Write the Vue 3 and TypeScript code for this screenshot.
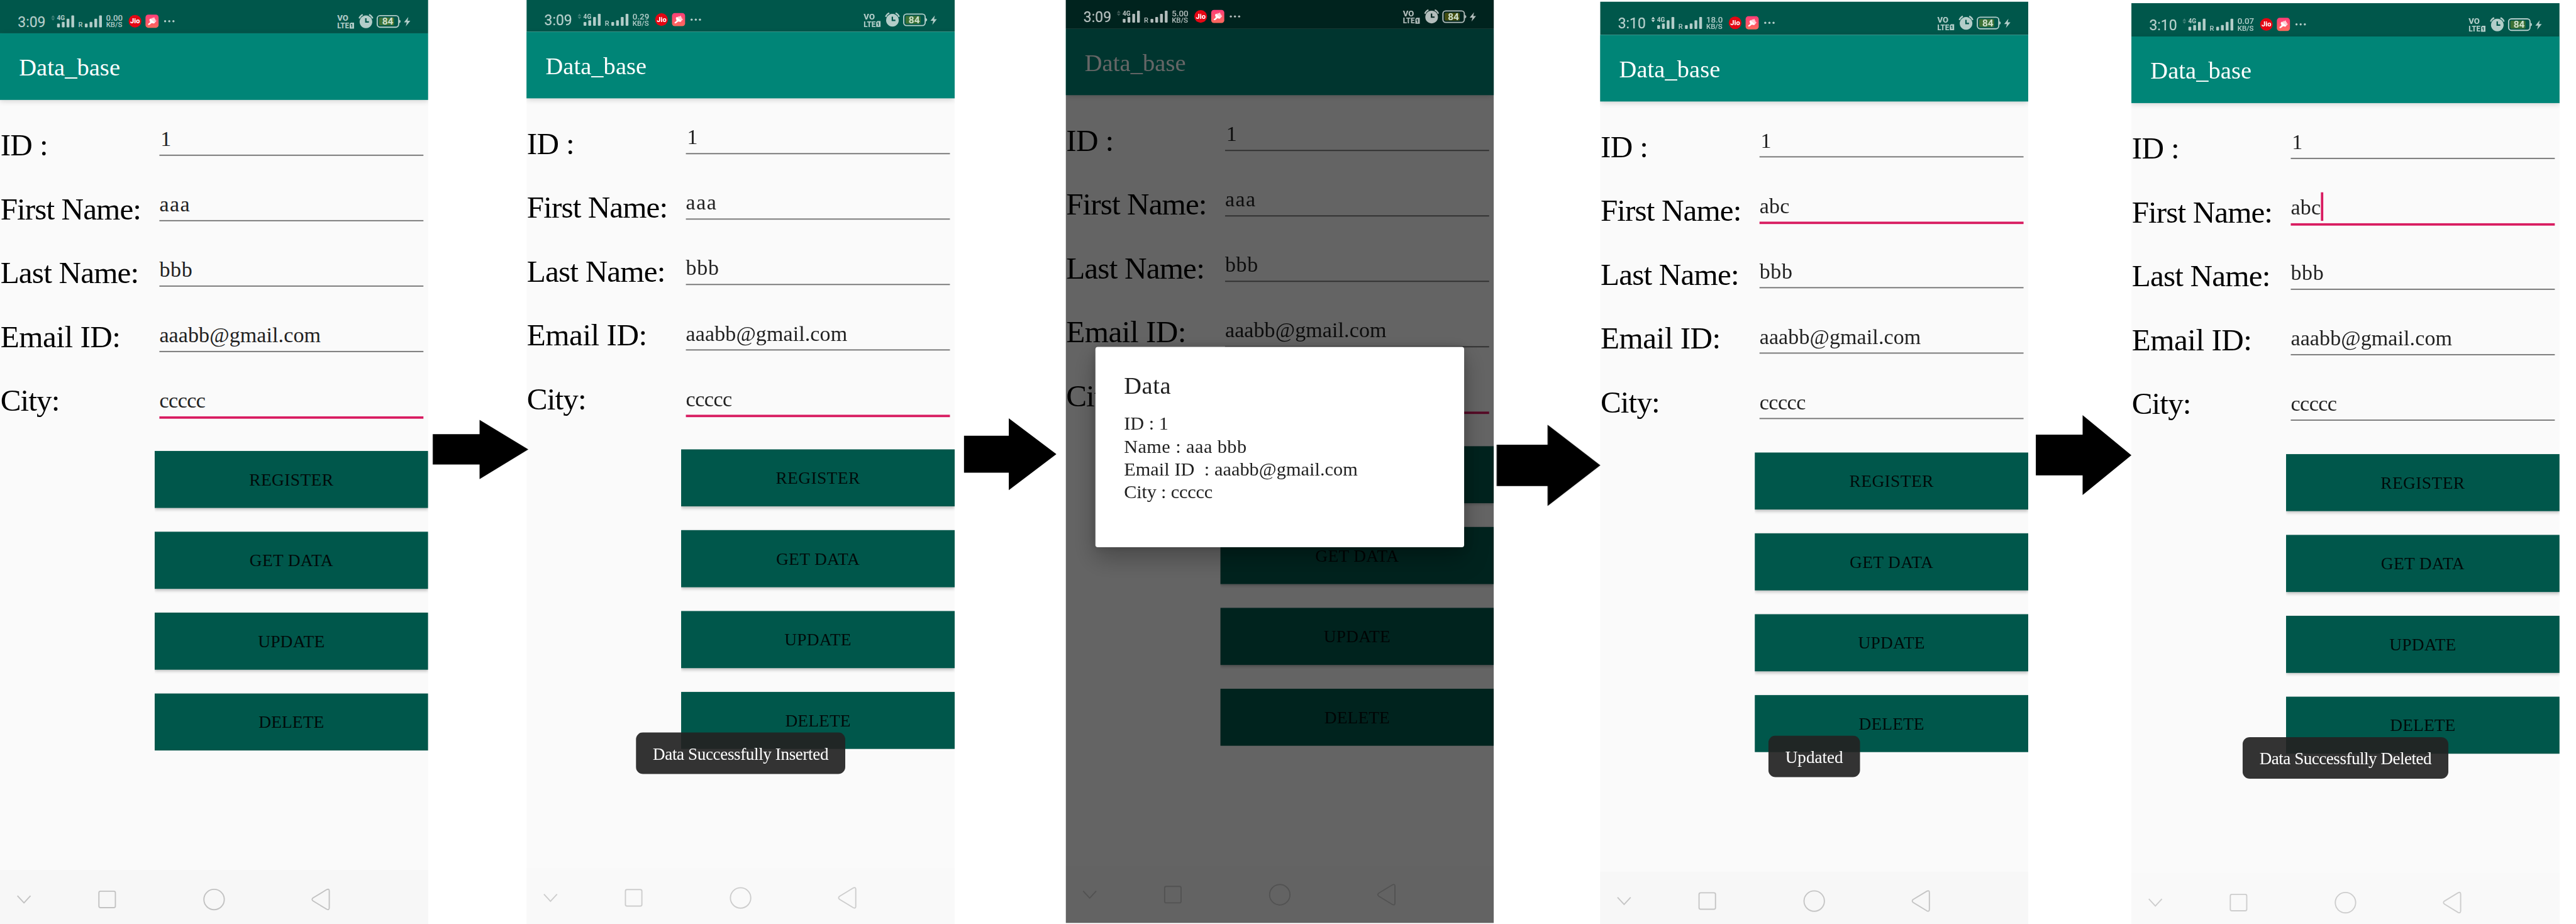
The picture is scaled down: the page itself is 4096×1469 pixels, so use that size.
<script setup lang="ts">
import type { Directive } from 'vue'

interface Arrow { left: number; neck: number; tip: number; headTop: number; shaftTop: number; mid: number; shaftBottom: number; headBottom: number; gap: number }
interface Screen {
  time: string
  rate: string
  top: number
  syncing?: boolean
  firstName: string
  focus: number
  caret?: boolean
  dialog?: boolean
  toast?: { text: string; width: number; advance: number }
  nav: string
  navLine: string
  arrow?: Arrow
}

const screens: Screen[] = [
  { time: '3:09', rate: '0.00', top: 0, firstName: 'aaa', focus: 4, nav: '#f7f7f7', navLine: '#c2c2c2',
    arrow: { gap: 248, left: 11.5, neck: 129.5, tip: 252.5, headTop: 1059, shaftTop: 1095, mid: 1133.5, shaftBottom: 1171.5, headBottom: 1208.5 } },
  { time: '3:09', rate: '0.29', top: -4, firstName: 'aaa', focus: 4, nav: '#f9f9f9', navLine: '#cdcdcd',
    toast: { text: 'Data Successfully Inserted', width: 528, advance: 443 },
    arrow: { gap: 280, left: 23.5, neck: 136.5, tip: 256.5, headTop: 1055, shaftTop: 1099, mid: 1145.5, shaftBottom: 1192, headBottom: 1236 } },
  { time: '3:09', rate: '5.00', top: -12, firstName: 'aaa', focus: 4, dialog: true, nav: '#f8f8f8', navLine: '#cdcdcd',
    arrow: { gap: 268, left: 7, neck: 135.5, tip: 268.5, headTop: 1071, shaftTop: 1121.5, mid: 1173.5, shaftBottom: 1226, headBottom: 1276 } },
  { time: '3:10', rate: '18.0', top: 4, syncing: true, firstName: 'abc', focus: 1, nav: '#f7f7f7', navLine: '#c5c5c5',
    toast: { text: 'Updated', width: 231, advance: 146 },
    arrow: { gap: 260, left: 19, neck: 137, tip: 260, headTop: 1047, shaftTop: 1096, mid: 1148, shaftBottom: 1199, headBottom: 1248.5 } },
  { time: '3:10', rate: '0.07', top: 8, firstName: 'abc', focus: 1, caret: true, nav: '#f9f9f9', navLine: '#cdcdcd',
    toast: { text: 'Data Successfully Deleted', width: 519, advance: 434 } },
]

const labels = [
  { text: 'ID :', width: 119 },
  { text: 'First Name:', width: 354 },
  { text: 'Last Name:', width: 349 },
  { text: 'Email ID:', width: 303 },
  { text: 'City:', width: 149 },
]

const buttons = [
  { text: 'REGISTER', width: 213 },
  { text: 'GET DATA', width: 211 },
  { text: 'UPDATE', width: 169 },
  { text: 'DELETE', width: 165 },
]

const message = [
  { text: 'ID : 1', width: 112 },
  { text: 'Name : aaa bbb', width: 310 },
  { text: 'Email ID  : aaabb@gmail.com', width: 590 },
  { text: 'City : ccccc', width: 224 },
]

function fields(s: Screen) {
  return [
    { text: '1', width: 27 },
    { text: s.firstName, width: s.firstName === 'abc' ? 76 : 79 },
    { text: 'bbb', width: 84 },
    { text: 'aaabb@gmail.com', width: 407 },
    { text: 'ccccc', width: 116 },
  ]
}

function arrowPoints(a: Arrow) {
  return [
    [a.left, a.shaftTop], [a.neck, a.shaftTop], [a.neck, a.headTop], [a.tip, a.mid],
    [a.neck, a.headBottom], [a.neck, a.shaftBottom], [a.left, a.shaftBottom],
  ].map((p) => p.join(',')).join(' ')
}

/* Tracks a run of text so that its advance equals the given width. */
const vFit: Directive<HTMLElement, number> = {
  mounted(el, binding) {
    const count = (el.textContent ?? '').length
    el.style.letterSpacing = `${(binding.value - el.offsetWidth) / count}px`
  },
}
</script>

<template>
  <div class="viewport">
    <div class="stage">
      <template v-for="(s, i) in screens" :key="i">
        <section class="phone" :style="{ marginTop: s.top + 'px' }">
          <header class="status" :class="{ dim: s.dialog }">
            <svg class="status-icons" viewBox="0 0 1080 84">
              <g fill="#fff" fill-opacity=".7" font-family="Roboto, sans-serif" font-weight="500">
                <text x="45" y="68" font-size="37" font-weight="400" stroke="#fff" stroke-opacity=".35" stroke-width=".6" textLength="70" lengthAdjust="spacingAndGlyphs">{{ s.time }}</text>
                <path d="M129 44.500l4.700-6 4.700 6zM129 46.500h9.400l-4.700 5.500z" :fill-opacity="s.syncing ? .8 : .25" />
                <text x="143.500" y="51" font-size="16.500" font-weight="700" textLength="20" lengthAdjust="spacingAndGlyphs">4G</text>
                <rect x="144" y="59.500" width="7" height="9.500" rx="2" />
                <rect x="156" y="55" width="7" height="14" rx="2" />
                <rect x="168" y="47" width="7" height="22" rx="2" />
                <rect x="180" y="39" width="7" height="30" rx="2" />
                <text x="197.500" y="69" font-size="18" textLength="11" lengthAdjust="spacingAndGlyphs">R</text>
                <rect x="214" y="59.500" width="7" height="9.500" rx="2" />
                <rect x="226" y="55" width="7" height="14" rx="2" />
                <rect x="238" y="47" width="7" height="22" rx="2" />
                <rect x="250" y="39" width="7" height="30" rx="2" />
                <text x="267.500" y="53" font-size="21" textLength="42" lengthAdjust="spacingAndGlyphs">{{ s.rate }}</text>
                <text x="267.500" y="69" font-size="18.500" textLength="41" lengthAdjust="spacingAndGlyphs">KB/S</text>
                <circle cx="416.500" cy="53.500" r="2.700" />
                <circle cx="427" cy="53.500" r="2.700" />
                <circle cx="437.500" cy="53.500" r="2.700" />
                <text x="850.500" y="53" font-size="20" font-weight="800" textLength="28" lengthAdjust="spacingAndGlyphs">VO</text>
                <text x="850.500" y="71.500" font-size="20" font-weight="800" textLength="30" lengthAdjust="spacingAndGlyphs">LTE</text>
                <path fill-rule="evenodd" d="M885 57h8v15h-11V60zM886.500 60.500l-2 1.500v2l2-.8V69h2v-8.500z" />
                <path fill-rule="evenodd" d="M923 39a16 16 0 1 1-.01 0zM921 46v11h9.500v-3.500H924.500V46z" />
                <path d="M906 46.500q3-7 9-9.500M931 37q6 2.500 9 9.500" fill="none" stroke="#fff" stroke-opacity=".7" stroke-width="3.600" />
                <rect x="951.500" y="39.500" width="54" height="29" rx="7" fill="none" stroke="#fff" stroke-opacity=".7" stroke-width="3" />
                <path d="M1007 49.500q3.500 1 3.500 4.500t-3.500 4.500z" />
                <path d="M1030 43l-11 13.500h7L1023.500 66.500 1035 52.500h-7z" />
              </g>
              <rect x="956" y="44" width="38" height="20" rx="3" :fill="s.dialog ? '#434d10' : '#3d7236'" />
              <text x="964" y="62.500" font-family="Roboto, sans-serif" font-weight="700" font-size="23" fill="#cfe0cd" textLength="28" lengthAdjust="spacingAndGlyphs">84</text>
              <circle cx="340.500" cy="53.500" r="16" fill="#e30613" />
              <text x="328.500" y="59" font-family="Roboto, sans-serif" font-weight="800" font-size="17.500" fill="#fff" textLength="24.500" lengthAdjust="spacingAndGlyphs">Jio</text>
              <defs>
                <linearGradient :id="'app' + i" x1="0" y1="0" x2="0" y2="1">
                  <stop offset="0" stop-color="#ff3d78" /><stop offset="1" stop-color="#ff6a5c" />
                </linearGradient>
              </defs>
              <rect x="367" y="37" width="33" height="33" rx="7" :fill="`url(#app${i})`" />
              <path d="M379 47.500l2-1.500 1 1.500 2-3 1.500 1.500 3.300-2.800 1.700 3.800-1 1 2-.5.800 2.500-1 1.500 2.500-.5.700 2-5 5.500z" fill="#ffd0d6" />
              <path d="M376.800 50.500q-.8-1.500 2.200-3.500L390.500 57q-1.500 3-4 2l-2.500-.8q-2-.2-4 2l-2.500 2q-3.500 1.800-4.200-.7 0-1.500 2.500-2.800l2.500-2.400q.8-1.500-.8-3.300z" fill="#fff" />
            </svg>
          </header>
          <div class="appbar"><span v-fit="255">Data_base</span></div>

          <main class="form">
            <div class="labels">
              <div v-for="l in labels" :key="l.text" class="label"><span v-fit="l.width">{{ l.text }}</span></div>
            </div>
            <div class="inputs">
              <div v-for="(f, n) in fields(s)" :key="n" class="field" :class="{ focused: n === s.focus, numeric: n === 0 }">
                <span class="value"><span v-fit="f.width">{{ f.text }}</span><i v-if="s.caret && n === s.focus" class="caret" /></span>
              </div>
            </div>
          </main>
          <div class="actions">
            <div v-for="b in buttons" :key="b.text" class="button"><span v-fit="b.width">{{ b.text }}</span></div>
          </div>

          <footer class="nav" :style="{ background: s.nav }">
            <svg viewBox="0 0 1080 146" fill="none" :stroke="s.navLine" stroke-width="3">
              <path d="M44 65l16.500 18L77 65" />
              <rect x="249.500" y="53.500" width="41.500" height="41.500" rx="4" />
              <circle cx="540" cy="74.500" r="25.700" />
              <path d="M789.500 70.500L824 49.500q6.500-3 6.500 3.500v42.500q0 6.500-6.500 3.500l-34.500-21q-4.500-3.750 0-7.500z" />
            </svg>
          </footer>

          <div v-if="s.toast" class="toast" :style="{ width: s.toast.width + 'px' }"><span v-fit="s.toast.advance">{{ s.toast.text }}</span></div>
          <template v-if="s.dialog">
            <div class="scrim" />
            <div class="dialog">
              <h2><span v-fit="119">Data</span></h2>
              <p v-for="m in message" :key="m.text"><span v-fit="m.width">{{ m.text }}</span></p>
            </div>
          </template>
        </section>
        <svg v-if="s.arrow" class="arrow" :width="s.arrow.gap" height="2330">
          <polygon :points="arrowPoints(s.arrow)" />
        </svg>
      </template>
    </div>
  </div>
</template>

<style>
body {
  margin: 0;
  background: #fff;
}
</style>

<style scoped>
.viewport {
  width: 4096px;
  height: 1469px;
  overflow: hidden;
  background: #fff;
}
.stage {
  display: flex;
  align-items: flex-start;
  width: 6498px;
  height: 2330px;
  transform: scale(0.6304);
  transform-origin: 0 0;
  font-family: "Liberation Serif", "Times New Roman", serif;
  color: #000;
}
span {
  display: inline-block;
  white-space: pre;
}
.phone {
  position: relative;
  flex: none;
  display: flex;
  flex-direction: column;
  width: 1080px;
  height: 2340px;
  background: #fafafa;
  overflow: hidden;
}
.status {
  flex: none;
  height: 84px;
  background: #00574b;
}
.status.dim {
  position: relative;
  z-index: 3;
  background: #00231e;
}
.status-icons {
  display: block;
  width: 1080px;
  height: 84px;
}
.appbar {
  flex: none;
  height: 168px;
  box-sizing: border-box;
  padding-left: 48px;
  font-size: 61px;
  line-height: 174px;
  color: #fff;
  background: #008577;
  box-shadow: 0 4px 14px rgba(0, 0, 0, 0.18);
}
.form {
  display: flex;
  height: 840px;
}
.labels {
  width: 402px;
  padding-top: 33px;
}
.label {
  height: 161px;
  font-size: 78px;
  line-height: 161px;
  padding-left: 1px;
}
.inputs {
  width: 666px;
  padding-top: 15px;
}
.field {
  box-sizing: border-box;
  height: 126px;
  margin-bottom: 39px;
  padding-top: 44px;
  border-bottom: 3px solid #757575;
  font-size: 54px;
  color: #222;
}
.field.focused {
  height: 129px;
  margin-bottom: 36px;
  border-bottom: 6px solid #d81b60;
}
.field.numeric {
  padding-left: 3px;
}
.value {
  position: relative;
  display: block;
  width: max-content;
  line-height: 79px;
}
.caret {
  position: absolute;
  left: 76px;
  top: 1px;
  width: 6px;
  height: 72px;
  background: #d81b60;
}
.actions {
  display: flex;
  flex-direction: column;
  gap: 60px;
  margin: 45px 0 0 390px;
  overflow: hidden;
}
.button {
  height: 144px;
  box-sizing: border-box;
  padding-top: 1px;
  text-align: center;
  font-size: 43.5px;
  line-height: 143px;
  color: #000b0a;
  background: #00574b;
  box-shadow: 0 4px 8px rgba(0, 0, 0, 0.24);
}
.nav {
  flex: none;
  height: 146px;
  margin-top: auto;
}
.nav svg {
  display: block;
  width: 1080px;
  height: 146px;
}
.toast {
  position: absolute;
  top: 1851px;
  left: 540px;
  transform: translateX(-50%);
  height: 105px;
  border-radius: 18px;
  background: rgba(35, 35, 35, 0.925);
  color: #fff;
  font-size: 43px;
  line-height: 109px;
  text-align: center;
}
.scrim {
  position: absolute;
  inset: 0;
  z-index: 1;
  background: rgba(0, 0, 0, 0.6);
}
.dialog {
  position: absolute;
  z-index: 2;
  left: 75px;
  top: 887px;
  width: 930px;
  height: 505px;
  box-sizing: border-box;
  padding: 53px 72px;
  border-radius: 6px;
  background: #fff;
  color: #212121;
  box-shadow: 0 26px 60px rgba(0, 0, 0, 0.28), 0 0 26px rgba(0, 0, 0, 0.14);
}
.dialog h2 {
  margin: 0 0 21px;
  font-size: 61px;
  font-weight: 400;
  line-height: 90px;
}
.dialog p {
  margin: 0;
  font-size: 48px;
  line-height: 57.7px;
}
.arrow {
  position: relative;
  z-index: 4;
  flex: none;
  display: block;
  overflow: visible;
  fill: #000;
}
</style>
